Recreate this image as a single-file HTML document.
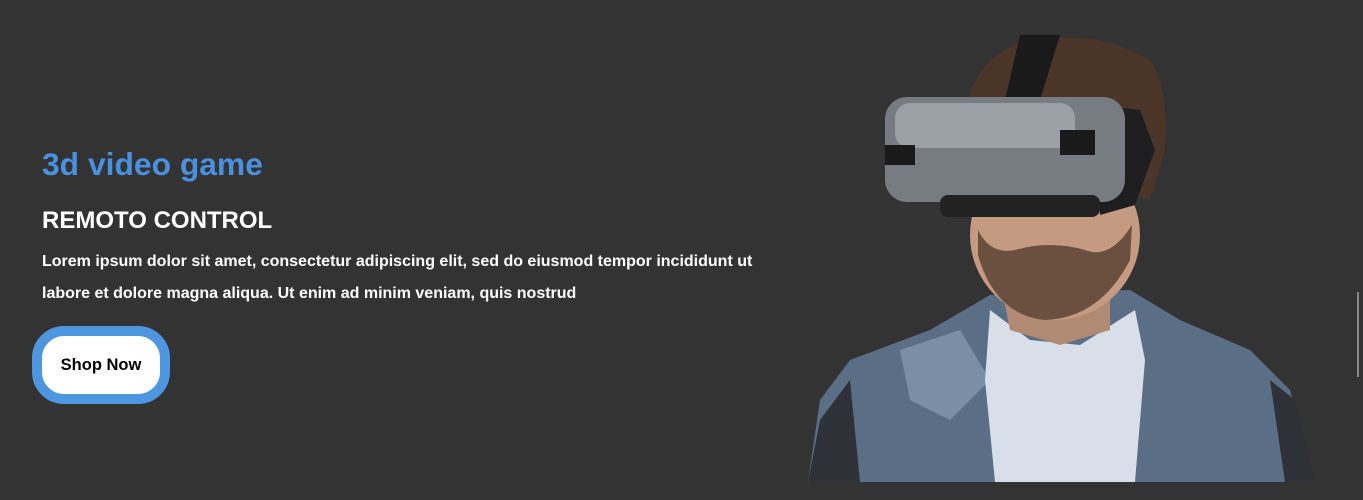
<!DOCTYPE html>
<html><head><style>
html,body{margin:0;padding:0;}
body{width:1363px;height:500px;background:#333333;position:relative;overflow:hidden;font-family:"Liberation Sans",Arial,sans-serif;}
h1{position:absolute;left:42px;top:146px;margin:0;font-size:31.8px;font-weight:bold;color:#4a90e0;}
h2{position:absolute;left:42px;top:207px;margin:0;font-size:24px;font-weight:bold;color:#fff;}
p{position:absolute;left:42px;top:246px;margin:0;width:730px;font-size:16px;font-weight:bold;color:#fff;line-height:32px;}
.btn{position:absolute;left:32px;top:326px;width:118px;height:58px;border:10px solid #4f96e0;border-radius:32px;background:#fff;font-weight:bold;font-size:16.5px;color:#000;text-align:center;line-height:58px;}
.sb{position:absolute;left:1357px;top:292px;width:2px;height:85px;background:#888;}
</style></head><body>
<h1>3d video game</h1>
<h2>REMOTO CONTROL</h2>
<p>Lorem ipsum dolor sit amet, consectetur adipiscing elit, sed do eiusmod tempor incididunt ut labore et dolore magna aliqua. Ut enim ad minim veniam, quis nostrud</p>
<div class="btn">Shop Now</div>
<div class="sb"></div>
<svg style="position:absolute;left:0;top:0" width="1363" height="500">
<path d="M808 482 L820 400 L850 360 L930 330 L990 295 L1130 290 L1180 320 L1250 350 L1290 390 L1315 482 Z" fill="#5a6e85"/>
<path d="M808 482 L820 420 L850 380 L860 482 Z" fill="#2e3238"/>
<path d="M1270 380 L1295 400 L1315 482 L1285 482 Z" fill="#2e3238"/>
<path d="M900 350 L960 330 L990 380 L950 420 L910 400 Z" fill="#7a8ea5"/>
<path d="M990 310 L1030 340 L1080 345 L1135 310 L1145 360 L1135 482 L995 482 L985 380 Z" fill="#d8dfe8"/>
<path d="M1000 280 L1110 280 L1110 330 L1060 345 L1010 330 Z" fill="#b08a72"/>
<ellipse cx="1055" cy="235" rx="85" ry="85" fill="#c49a80"/>
<path d="M978 255 Q995 315 1045 320 Q1100 318 1130 260 L1132 225 Q1110 260 1085 250 Q1050 240 1015 250 Q990 255 978 230 Z" fill="#6b5040"/>
<path d="M965 120 Q970 55 1030 40 Q1100 30 1150 60 Q1170 90 1165 150 L1150 200 L975 160 Z" fill="#4a3528"/>
<path d="M1020 35 L1060 35 L1040 100 L1005 100 Z" fill="#1a1a1a"/>
<path d="M1095 105 L1140 110 L1155 150 L1135 205 L1100 215 Z" fill="#1e1e20"/>
<rect x="885" y="97" width="240" height="105" rx="22" fill="#777c82"/>
<rect x="895" y="103" width="180" height="45" rx="15" fill="#9aa0a6"/>
<rect x="940" y="195" width="160" height="22" rx="8" fill="#222"/>
<rect x="885" y="145" width="30" height="20" fill="#1a1a1a"/>
<rect x="1060" y="130" width="35" height="25" fill="#1a1a1a"/>
</svg>
</body></html>
